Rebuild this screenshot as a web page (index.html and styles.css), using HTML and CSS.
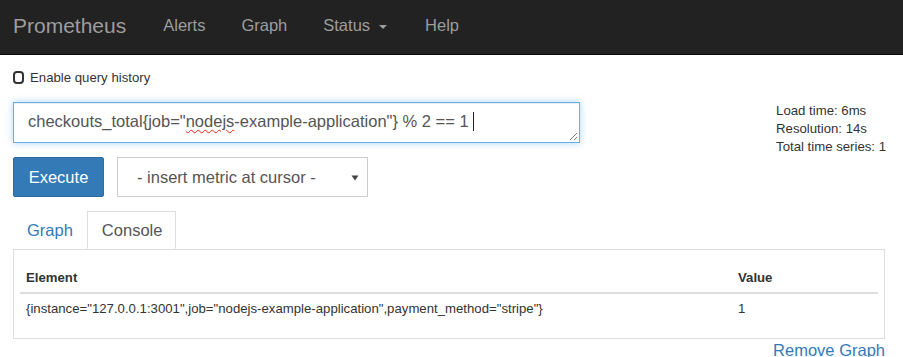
FILE: index.html
```html
<!DOCTYPE html>
<html>
<head>
<meta charset="utf-8">
<title>Prometheus Time Series Collection and Processing Server</title>
<link rel="stylesheet" href="styles.css">
</head>
<body>
<nav class="navbar">
  <a class="brand" href="#">Prometheus</a>
  <ul class="nav">
    <li><a href="#">Alerts</a></li>
    <li><a href="#">Graph</a></li>
    <li><a href="#">Status<span class="caret"></span></a></li>
    <li><a href="#">Help</a></li>
  </ul>
</nav>
<main class="container">
  <label class="history"><span class="checkbox"></span>Enable query history</label>
  <div class="query-row">
    <div class="expr">checkouts_total{job="<span class="misspelled">nodejs</span>-example-application"} % 2 == 1 <span class="cursor"></span><svg class="grip" width="10" height="10" viewBox="0 0 10 10"><path d="M9 2 L2 9 M9 6 L6 9" stroke="#777" stroke-width="1" fill="none"/></svg></div>
    <div class="stats">
      <div>Load time: 6ms</div>
      <div>Resolution: 14s</div>
      <div>Total time series: 1</div>
    </div>
  </div>
  <div class="actions">
    <button class="btn-execute">Execute</button>
    <div class="metric-select">
      <span>- insert metric at cursor -</span>
      <svg class="arrow" width="8" height="6" viewBox="0 0 8 6"><path d="M0.5 0.5 H7.5 L4 5.5 Z" fill="#444"/></svg>
    </div>
  </div>
  <ul class="tabs">
    <li class="tab"><a href="#">Graph</a></li>
    <li class="tab active"><a href="#">Console</a></li>
  </ul>
  <div class="panel">
    <table class="results">
      <colgroup><col class="col-element"><col class="col-value"></colgroup>
      <thead>
        <tr><th>Element</th><th>Value</th></tr>
      </thead>
      <tbody>
        <tr><td>{instance="127.0.0.1:3001",job="nodejs-example-application",payment_method="stripe"}</td><td>1</td></tr>
      </tbody>
    </table>
  </div>
  <div class="remove"><a href="#">Remove Graph</a></div>
</main>
</body>
</html>
```

FILE: styles.css
```css
* { box-sizing: border-box; }

html, body {
  margin: 0;
  padding: 0;
  background: #fff;
}

body {
  font-family: "Liberation Sans", Arial, sans-serif;
  font-size: 13.2px;
  color: #333;
  overflow: hidden;
}

a { text-decoration: none; }

/* Navbar */
.navbar {
  display: flex;
  align-items: center;
  height: 55px;
  padding: 0 0 3px 13px;
  background: #222;
  border-bottom: 1px solid #080808;
}

.brand {
  font-size: 21px;
  color: #9d9d9d;
  margin-right: 19px;
}

.nav {
  display: flex;
  list-style: none;
  margin: 0;
  padding: 0;
}

.nav li a {
  display: flex;
  align-items: center;
  padding: 0 18px;
  font-size: 16.5px;
  color: #9d9d9d;
}

.caret {
  display: inline-block;
  width: 0;
  height: 0;
  margin-left: 9px;
  margin-right: 2px;
  margin-top: 2px;
  border-top: 4px solid #9d9d9d;
  border-left: 4px solid transparent;
  border-right: 4px solid transparent;
}

/* Content */
.container {
  padding: 0 18px 0 13px;
}

.history {
  display: flex;
  align-items: center;
  height: 18px;
  line-height: 18px;
  margin-top: 14px;
  font-size: 13.2px;
  color: #333;
}

.checkbox {
  display: inline-block;
  width: 11px;
  height: 13px;
  border: 2.5px solid #333;
  border-radius: 4px;
  margin-right: 6px;
  margin-top: -1px;
}

.query-row {
  display: flex;
  justify-content: space-between;
  align-items: flex-start;
  height: 41px;
  margin-top: 15px;
}

.expr {
  position: relative;
  width: 567px;
  height: 41px;
  padding: 9px 14px;
  border: 1px solid #66afe9;
  box-shadow: inset 0 1px 1px rgba(0,0,0,.075), 0 0 7px rgba(102,175,233,.55);
  font-size: 16.5px;
  line-height: 19px;
  white-space: pre;
  color: #555;
}

.misspelled {
  text-decoration: underline wavy #e21;
  text-decoration-thickness: 1px;
  text-underline-offset: 2px;
}

.cursor {
  display: inline-block;
  width: 1px;
  height: 19px;
  background: #222;
  vertical-align: top;
}

.grip {
  position: absolute;
  right: 1px;
  bottom: 1px;
}

.stats {
  font-size: 13.2px;
  line-height: 18px;
  color: #333;
  margin-right: -1px;
}

.actions {
  display: flex;
  gap: 13px;
  margin-top: 14px;
}

.btn-execute {
  width: 91px;
  height: 40px;
  margin: 0;
  padding: 0;
  background: #337ab7;
  border: 1px solid #2e6da4;
  border-radius: 2px;
  color: #fff;
  font-family: "Liberation Sans", Arial, sans-serif;
  font-size: 16.5px;
}

.metric-select {
  display: flex;
  align-items: center;
  justify-content: space-between;
  width: 251px;
  height: 40px;
  padding: 0 8px 0 19px;
  border: 1px solid #ccc;
  background: #fff;
  font-size: 16.5px;
  color: #555;
}

.arrow {
  margin-top: 1px;
}

/* Tabs */
.tabs {
  display: flex;
  list-style: none;
  margin: 14px 0 0 0;
  padding: 0;
}

.tab a {
  display: block;
  height: 38px;
  line-height: 36px;
  padding: 0 13px;
  border: 1px solid transparent;
  font-size: 16.5px;
  color: #337ab7;
}

.tab.active a {
  position: relative;
  z-index: 1;
  padding: 0 13px 0 14px;
  background: #fff;
  border-color: #ddd;
  border-bottom-color: #fff;
  color: #555;
}

.tab.active {
  margin-bottom: -1px;
}

.panel {
  border: 1px solid #ddd;
  padding: 13px 6px 15px 6px;
}

.results {
  width: 100%;
  border-collapse: collapse;
  table-layout: fixed;
}

.col-value { width: 146px; }

.results th,
.results td {
  text-align: left;
  padding: 5px 6px;
  line-height: 19px;
  font-size: 13.2px;
  white-space: nowrap;
}

.results th {
  font-weight: bold;
  border-bottom: 2px solid #ddd;
}

.remove {
  display: flex;
  justify-content: flex-end;
  margin-top: 2px;
  line-height: 19px;
}

.remove a {
  font-size: 16.5px;
  color: #337ab7;
}
```
